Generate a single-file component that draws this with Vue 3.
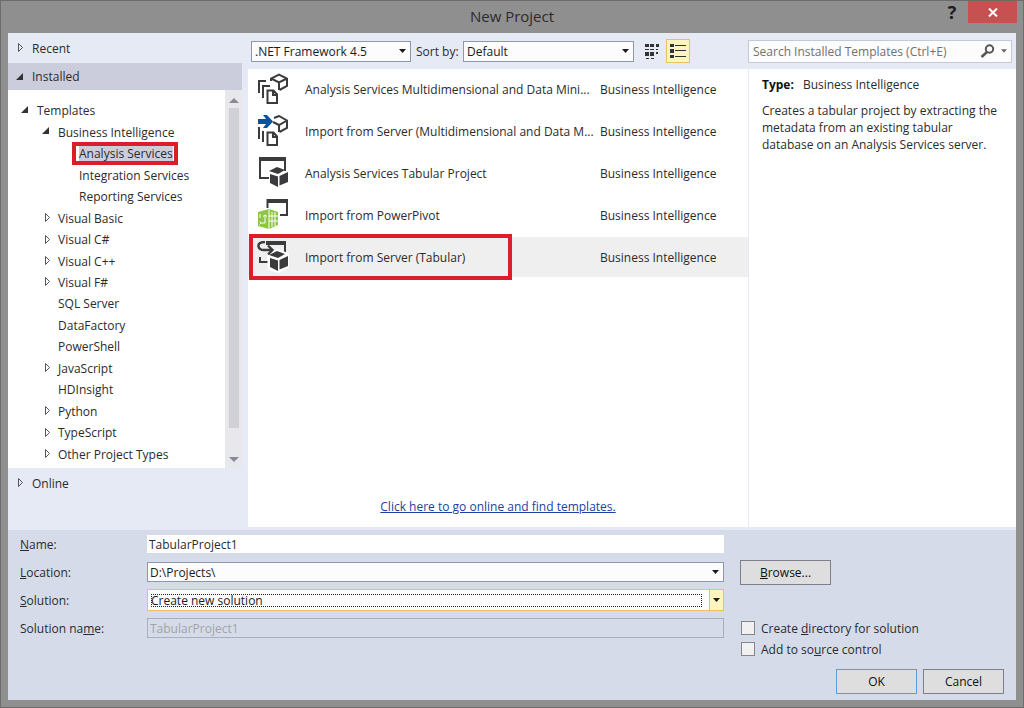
<script setup>
import { ref } from 'vue'

const tree = [
  { label: 'Templates', level: 0, state: 'open' },
  { label: 'Business Intelligence', level: 1, state: 'open' },
  { label: 'Analysis Services', level: 2, marked: true },
  { label: 'Integration Services', level: 2 },
  { label: 'Reporting Services', level: 2 },
  { label: 'Visual Basic', level: 1, state: 'closed' },
  { label: 'Visual C#', level: 1, state: 'closed' },
  { label: 'Visual C++', level: 1, state: 'closed' },
  { label: 'Visual F#', level: 1, state: 'closed' },
  { label: 'SQL Server', level: 1 },
  { label: 'DataFactory', level: 1 },
  { label: 'PowerShell', level: 1 },
  { label: 'JavaScript', level: 1, state: 'closed' },
  { label: 'HDInsight', level: 1 },
  { label: 'Python', level: 1, state: 'closed' },
  { label: 'TypeScript', level: 1, state: 'closed' },
  { label: 'Other Project Types', level: 1, state: 'closed' }
]

const templates = [
  { name: 'Analysis Services Multidimensional and Data Mini...', icon: 'multi' },
  { name: 'Import from Server (Multidimensional and Data M...', icon: 'multiImport' },
  { name: 'Analysis Services Tabular Project', icon: 'tabular' },
  { name: 'Import from PowerPivot', icon: 'pivot' },
  { name: 'Import from Server (Tabular)', icon: 'tabularImport' }
]

const selected = ref(4)
const projectName = ref('TabularProject1')
</script>

<template>
  <div class="window">
    <header class="titlebar">
      <h1>New Project</h1>
      <div class="caption">
        <button class="help" aria-label="Help">?</button>
        <button class="close" aria-label="Close">
          <svg width="10" height="9" viewBox="0 0 10 9"><path d="M1 .5 9 8.500M9 .5 1 8.500" stroke="#fff" stroke-width="2" /></svg>
        </button>
      </div>
    </header>

    <main class="client">
      <div class="upper">
        <nav class="sidebar">
          <button class="section">
            <svg class="tri" viewBox="0 0 10 10"><path d="M3.500 .5v8l4-4z" fill="none" stroke="#555" /></svg>Recent
          </button>
          <button class="section installed">
            <svg class="tri" viewBox="0 0 10 10"><path d="M8 1v7H1z" fill="#333" /></svg>Installed
          </button>
          <div class="treebox">
            <ul class="tree">
              <li v-for="n in tree" :key="n.label" :class="'lv' + n.level">
                <svg v-if="n.state === 'open'" class="tri" viewBox="0 0 10 10"><path d="M8 0v7H1z" fill="#333" /></svg>
                <svg v-else-if="n.state === 'closed'" class="tri" viewBox="0 0 10 10"><path d="M4.500 .5v8l4-4z" fill="none" stroke="#555" /></svg>
                <span v-else class="tri"></span>
                <a href="#" :class="{ marked: n.marked }">{{ n.label }}</a>
              </li>
            </ul>
            <div class="scroll">
              <svg width="10" height="5" viewBox="0 0 10 5"><path d="M5 0l5 5H0z" fill="#868999" /></svg>
              <div class="thumb"></div>
              <svg width="10" height="5" viewBox="0 0 10 5"><path d="M5 5l5-5H0z" fill="#868999" /></svg>
            </div>
          </div>
          <button class="section online">
            <svg class="tri" viewBox="0 0 10 10"><path d="M3.500 .5v8l4-4z" fill="none" stroke="#555" /></svg>Online
          </button>
        </nav>

        <section class="center">
          <div class="toolbar">
            <div class="combo framework">
              <select aria-label="Framework"><option>.NET Framework 4.5</option></select>
              <svg class="arrow" viewBox="0 0 7 4"><path d="M0 0h7L3.500 4z" /></svg>
            </div>
            <label for="sort">Sort by:</label>
            <div class="combo sort">
              <select id="sort"><option>Default</option></select>
              <svg class="arrow" viewBox="0 0 7 4"><path d="M0 0h7L3.500 4z" /></svg>
            </div>
            <button class="view" aria-label="Small icons">
              <svg width="14" height="17" viewBox="0 0 14 17" fill="#333">
                <path d="M0 1h4v3H0zM5 1h4v3H5zM11 1h3v3h-3zM0 9h4v4H0zM5 9h4v4H5zM11 9h2v2h-2z" />
                <path d="M0 6h4v1H0zM5 6h4v1H5zM11 6h2v1h-2zM1 15h3v1H1zM6 15h3v1H6z" />
              </svg>
            </button>
            <button class="view active" aria-label="Medium icons">
              <svg width="18" height="16" viewBox="0 0 18 16" fill="#333">
                <path d="M1 1h4v3H1zM1 6h4v4H1zM1 12h4v3H1z" />
                <path d="M6 2h11v1H6zM6 7h11v1H6zM6 13h11v1H6z" />
              </svg>
            </button>
          </div>
          <div class="results">
            <ul class="list">
              <li v-for="(t, i) in templates" :key="t.name">
                <button class="item" :class="{ selected: selected === i }" @click="selected = i">
                  <svg class="icon" viewBox="0 0 32 32" fill="none" stroke="#3b3b3d" stroke-width="2">
                    <template v-if="t.icon === 'multi'">
                      <path d="M14 8V5.500L22 1.500l8 4V13l-7.500 4M14 5.500l8 4 8-4M22 9.500V17" />
                      <path d="M2 20V8h7M6 25V13h7M10.500 17.500h6l3.500 4V30h-9.500zM16 18v4h4" />
                    </template>
                    <template v-else-if="t.icon === 'multiImport'">
                      <path d="M17 3l5-2 8 4.500V13l-7.500 4M16 7l6 3 8-4.500M22 9.500V17" />
                      <path d="M2 12v12M6 16v11M10.500 17.500h6l3.500 4V30h-9.500zM16 18v4h4" />
                      <path d="M1 4h8L6 0h4l6 6.500-6 6.500H6l3-4H1z" fill="#0a539b" stroke="none" />
                    </template>
                    <template v-else-if="t.icon === 'pivot'">
                      <path d="M10.500 9V1h19.500v15h-7" />
                      <path d="M10 0h21v4H10z" fill="#3b3b3d" stroke="none" />
                      <path d="M1 13l11-3 9 3v13l-9 4-11-3z" fill="#8dc63f" stroke="none" />
                      <path d="M12 10.500V30M15 13v15M18 13v14M12 17h9M12 22h9M4 24h4V16M2.500 22.500 4 24l-1.500 1.500M6 17.500 8 16l2 1.500M3 15v4" stroke="#fff" stroke-width="1" />
                    </template>
                    <template v-else>
                      <path d="M12 21H3V1h25v13" />
                      <path d="M2 0h27v4H2z" fill="#3b3b3d" stroke="none" />
                      <template v-if="t.icon === 'tabularImport'">
                        <path d="M0 0h9v4h6l4 5-4 7H0z" fill="#efefef" stroke="none" />
                        <path d="M3 16v5h6" />
                        <path d="M11 14l9-5 11 4v13l-10 5-9-3z" fill="#fff" stroke="#fff" />
                        <path d="M8 1C3 1 1 3 1.500 5.500 2 8 4 9 7 9h8M11 4.500l4.500 4.500-4.500 4.500" stroke-width="2.400" />
                      </template>
                      <path d="M12 14l8-4 8 3-7 4zM13 17l8 2.500V30l-8-4zM22.500 19l8.500-4v10l-8.500 3.500z" fill="#3b3b3d" stroke="none" />
                    </template>
                  </svg>
                  <span class="name">{{ t.name }}</span>
                  <span class="kind">Business Intelligence</span>
                  <span v-if="i === 4" class="callout"></span>
                </button>
              </li>
            </ul>
            <a class="golink" href="#">Click here to go online and find templates.</a>
          </div>
        </section>

        <aside class="side">
          <div class="searchrow">
            <div class="search">
              <input type="text" aria-label="Search Installed Templates" placeholder="Search Installed Templates (Ctrl+E)" />
              <svg width="15" height="14" viewBox="0 0 15 14" fill="none" stroke="#555"><circle cx="9.500" cy="5" r="3.700" stroke-width="2" /><path d="M7 8l-5.500 5" stroke-width="2.600" /></svg>
              <svg class="drop" width="6" height="4" viewBox="0 0 7 4"><path d="M0 0h7L3.500 4z" fill="#666" /></svg>
            </div>
          </div>
          <div class="details">
            <p><b>Type:</b><span>Business Intelligence</span></p>
            <p>Creates a tabular project by extracting the metadata from an existing tabular database on an Analysis Services server.</p>
          </div>
        </aside>
      </div>

      <form class="form" @submit.prevent>
        <label for="name"><u>N</u>ame:</label>
        <input id="name" v-model="projectName" class="field plain" type="text" />

        <label for="location"><u>L</u>ocation:</label>
        <div class="combo field">
          <select id="location"><option>D:\Projects\</option></select>
          <svg class="arrow" viewBox="0 0 7 4"><path d="M0 0h7L3.500 4z" /></svg>
        </div>
        <button type="button" class="btn browse"><u>B</u>rowse...</button>

        <label for="solution"><u>S</u>olution:</label>
        <div class="combo field focused">
          <select id="solution"><option>Create new solution</option></select>
          <span class="dots"></span>
          <span class="hot"><svg class="arrow" viewBox="0 0 7 4"><path d="M0 0h7L3.500 4z" /></svg></span>
        </div>

        <label for="solname">Solution na<u>m</u>e:</label>
        <input id="solname" class="field disabled" type="text" value="TabularProject1" disabled />
        <label class="check"><input type="checkbox" /><span>Create <u>d</u>irectory for solution</span></label>
        <label class="check"><input type="checkbox" /><span>Add to so<u>u</u>rce control</span></label>

        <div class="actions">
          <button type="submit" class="btn ok">OK</button>
          <button type="button" class="btn">Cancel</button>
        </div>
      </form>
    </main>
  </div>
</template>

<style>
body { margin: 0; }
</style>

<style scoped>
* { box-sizing: border-box; }
.window {
  display: flex; flex-direction: column; min-height: 100vh; padding: 0 7px 7px;
  background: #8f8f8f; border: 1px solid #6c6c6c;
  font: 12px/17px "Open Sans", "Noto Sans", sans-serif; color: #2b2b2d;
}
button, input, select { font: inherit; color: inherit; border-radius: 0; margin: 0; }
button { padding: 0; border: 0; background: none; text-align: left; }
ul { list-style: none; margin: 0; padding: 0; }
.titlebar { position: relative; height: 32px; display: flex; justify-content: center; padding-top: 5px; }
h1 { margin: 0; font-size: 15px; line-height: 20px; font-weight: 400; }
.caption { position: absolute; right: -1px; top: 0; display: flex; }
.help { width: 32px; height: 22px; font-size: 18px; font-weight: 700; text-align: center; line-height: 22px; color: #1d1d1d; }
.close { width: 49px; height: 22px; display: flex; align-items: center; justify-content: center; background: #c75050; }
.client { flex: 1; display: flex; flex-direction: column; background: #e6eaf5; }
.upper { flex: 1; display: grid; grid-template-columns: 240px minmax(0, 1fr) 268px; padding-bottom: 3px; }

.sidebar { display: flex; flex-direction: column; padding-right: 6px; }
.section { display: flex; align-items: center; height: 30px; padding-left: 7px; }
.tri { width: 10px; height: 10px; flex: none; margin-right: 7px; }
.installed { height: 27px; background: #cbcddc; }
.treebox { flex: 1; display: flex; }
.tree { flex: 1; background: #fff; padding: 10px 0 3px; display: grid; grid-auto-rows: 1fr; }
.tree li { display: flex; align-items: center; }
.tree a { color: inherit; text-decoration: none; white-space: nowrap; }
.lv0 { padding-left: 12px; }
.lv1 { padding-left: 33px; }
.lv2 { padding-left: 54px; }
.tree a.marked { position: relative; background: #cbcddc; }
.marked::after { content: ""; position: absolute; inset: -3px -5px -3px -7px; border: 4px solid #dc1e28; }
.scroll { width: 17px; background: #e8e8ec; display: flex; flex-direction: column; align-items: center; padding: 8px 0 6px; gap: 5px; }
.thumb { width: 10px; flex: 1; background: #d0d1d7; margin-bottom: 24px; }
.online { margin-bottom: 29px; }

.center { display: flex; flex-direction: column; }
.toolbar { height: 36px; display: flex; align-items: center; padding-left: 3px; }
.combo { position: relative; display: flex; background: #fcfcfc; border: 1px solid #8e97ab; }
.combo select { appearance: none; width: 100%; border: 0; outline: 0; background: none; padding: 0 16px 0 3px; color: #1b1b1c; }
.arrow { width: 7px; height: 4px; fill: #1b1b1c; }
.combo > .arrow { position: absolute; right: 4px; top: 50%; margin-top: -2px; pointer-events: none; }
.framework { width: 160px; height: 21px; }
.toolbar label { width: 52px; padding-left: 5px; white-space: nowrap; }
.sort { width: 171px; height: 21px; }
.view { width: 24px; height: 24px; display: flex; align-items: center; justify-content: center; margin-left: 6px; border: 1px solid transparent; }
.view.active { margin-left: 2px; background: #fdf4bf; border-color: #e5c365; }
.results { flex: 1; background: #fff; display: flex; flex-direction: column; padding-bottom: 12px; }
.list { display: flex; flex-direction: column; gap: 2px; }
.item { position: relative; width: 100%; height: 40px; display: flex; align-items: center; padding-left: 9px; }
.selected { background: #efefef; }
.icon { width: 32px; height: 32px; flex: none; margin-right: 16px; }
.name { flex: 1; min-width: 0; white-space: nowrap; }
.kind { width: 148px; white-space: nowrap; }
.callout { position: absolute; left: 1px; top: -3px; bottom: -3px; width: 263px; border: 4px solid #dc1e28; }
.golink { margin-top: auto; align-self: center; color: #1c3fa0; text-decoration: underline; }

.side { display: flex; flex-direction: column; }
.searchrow { height: 36px; display: flex; align-items: center; padding-right: 4px; }
.search { flex: 1; height: 23px; display: flex; align-items: center; background: #fcfcfc; border: 1px solid #c3c9d8; padding-right: 4px; }
.search input { flex: 1; min-width: 0; border: 0; outline: 0; background: none; padding: 0 0 0 4px; }
.search input::placeholder { color: #717171; opacity: 1; }
.drop { margin-left: 6px; }
.details { flex: 1; background: #fff; border-left: 1px solid #e6eaf5; padding: 7px 12px 0 13px; }
.details p { margin: 0 0 9px; }
.details b { color: #111; margin-right: 9px; }

.form {
  display: grid; grid-template-columns: 127px minmax(0, 1fr) 292px; grid-template-rows: repeat(4, 28px) 14px auto;
  align-items: center; background: #d6dbe9; padding: 0 0 6px 12px;
}
.form > label { grid-column: 1; }
.form > .field { grid-column: 2; width: 100%; height: 20px; }
.form input[type="text"] { padding: 0 2px; outline: 0; }
.form .plain { height: 18px; border: 0; background: #fff; }
.form .focused { height: 22px; border-color: #e5c365; }
.form .disabled { background: #d6dbe9; border: 1px solid #a9afc0; color: #a2a4a5; }
.form .combo select { padding-left: 2px; }
.form .focused select { padding-left: 3px; }
.dots { position: absolute; inset: 4px 21px 3px 3px; border: 1px dotted #222; pointer-events: none; }
.hot { position: absolute; right: 0; top: 0; bottom: 0; width: 14px; display: flex; align-items: center; justify-content: center; background: #fdf4bf; border-left: 1px solid #e5c365; pointer-events: none; }
.btn { height: 25px; width: 81px; text-align: center; background: #dedede; border: 1px solid #7d8088; color: #111; }
.browse { grid-column: 3; width: 91px; margin-left: 16px; }
.btn.ok { border-color: #569de5; }
.form > .check { grid-column: 3; display: flex; align-items: center; margin-left: 17px; gap: 6px; }
.check input { appearance: none; width: 14px; height: 14px; background: #f1f1f1; border: 1px solid #85878d; }
.actions { grid-column: 1 / -1; display: flex; justify-content: flex-end; gap: 6px; padding: 13px 12px 0 0; }
</style>
